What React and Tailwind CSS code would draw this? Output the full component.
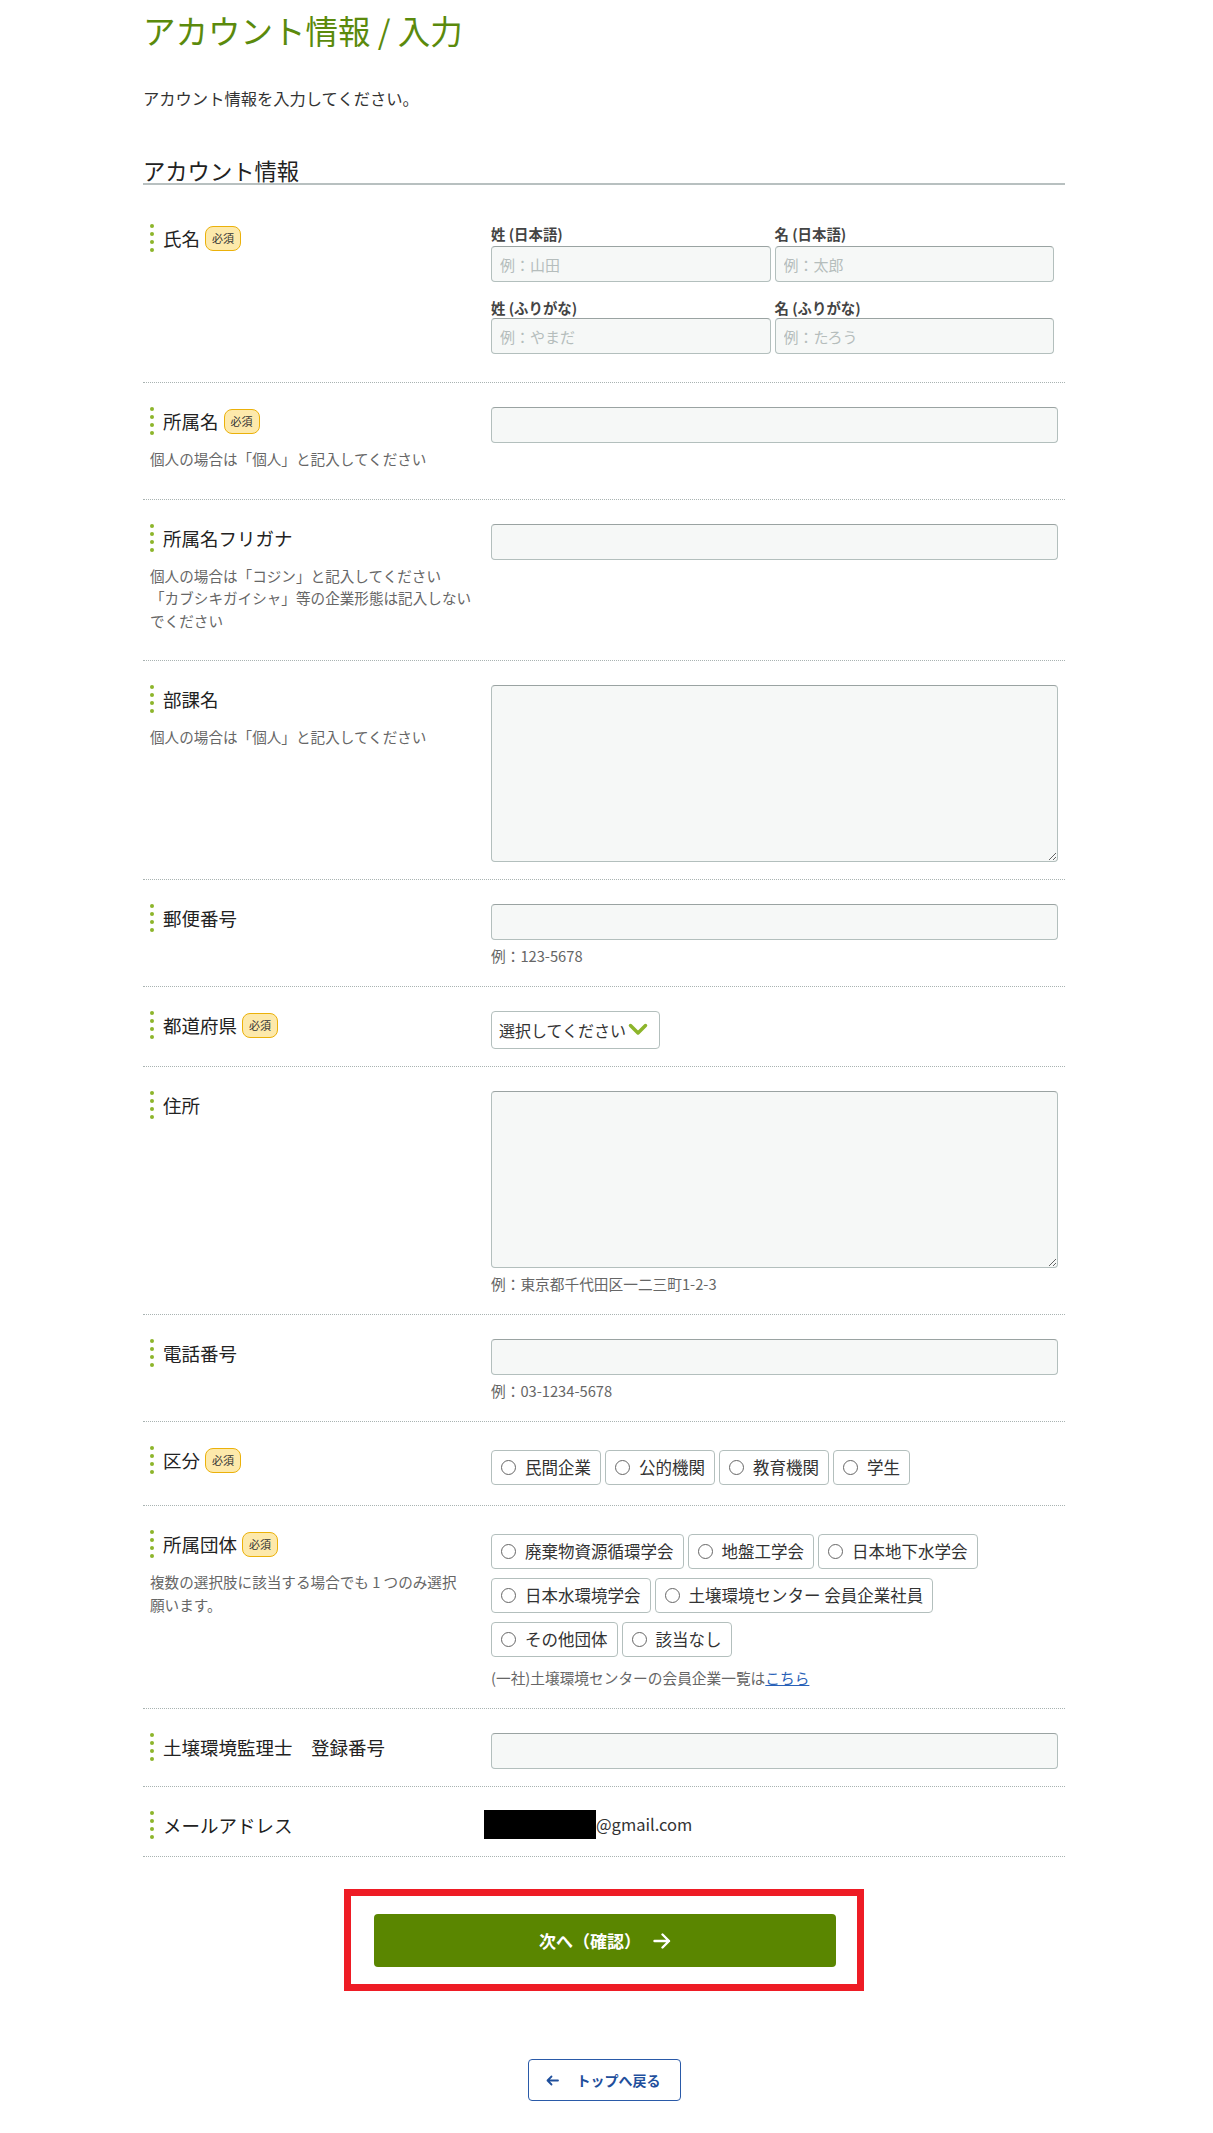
import React from 'react';

const Dots = () => (
  <span className="flex flex-col gap-[4px] shrink-0">
    {[0, 1, 2, 3].map(i => (
      <span key={i} className="block w-[4px] h-[4px] rounded-full bg-[#8db52b]" />
    ))}
  </span>
);

const Badge = () => (
  <span className="inline-flex items-center justify-center h-[25px] px-[6px] rounded-[8px] border border-[#ebb10a] bg-[#fde9ab] text-[11px] leading-none text-[#333]">
    必須
  </span>
);

const Label = ({ text, required }) => (
  <div className="flex items-center gap-[9px]">
    <Dots />
    <div className="flex items-center gap-[5px]">
      <span className="text-[18.5px] leading-[26px] text-[#222]">{text}</span>
      {required && <Badge />}
    </div>
  </div>
);

const Help = ({ children }) => (
  <p className="mt-[13px] mb-[11px] text-[14.6px] leading-[22.5px] text-[#666]">{children}</p>
);

const Hint = ({ children }) => (
  <p className="mt-[6px] mb-[3px] text-[14.7px] leading-[20px] text-[#666]">{children}</p>
);

const TextInput = ({ placeholder }) => (
  <input
    readOnly
    placeholder={placeholder}
    className="block w-full h-[36px] px-[8px] rounded-[4px] border border-[#b3bfbd] border-t-[#9aa3a2] bg-[#f6f8f7] text-[15px] text-[#333] placeholder:text-[#b5bdbc] outline-none"
  />
);

const TextArea = () => (
  <textarea
    readOnly
    className="block w-full h-[177px] px-[8px] py-[6px] rounded-[4px] border border-[#b3bfbd] border-t-[#9aa3a2] bg-[#f6f8f7] text-[15px] outline-none"
  />
);

const Radio = ({ text }) => (
  <label className="inline-flex items-center gap-[9px] h-[35px] px-[9px] rounded-[4px] border border-[#b3bfbd] bg-white text-[16.5px] text-[#333] whitespace-nowrap">
    <span className="block w-[15px] h-[15px] rounded-full border border-[#666] bg-white" />
    {text}
  </label>
);

const Row = ({ label, required, help, children }) => (
  <div className="flex px-[7px] pt-[24px] pb-[17px] border-b border-dotted border-[#a9b3b2]">
    <div className="w-[341px] shrink-0">
      <Label text={label} required={required} />
      {help && <Help>{help}</Help>}
    </div>
    <div className="flex-1">{children}</div>
  </div>
);

const SubLabel = ({ children }) => (
  <p className="text-[14.4px] leading-[20px] font-bold text-[#444]">{children}</p>
);

export default function App() {
  return (
    <div className="min-h-[2133px] bg-white font-['Noto_Sans_CJK_JP','Noto_Sans',sans-serif] text-[#333]">
      <div className="w-[922px] ml-[143px] pt-[8px] pb-[30px]">
        <h1 className="text-[32.5px] leading-[44px] font-normal text-[#5b8a0c]">アカウント情報 / 入力</h1>
        <p className="mt-[34px] text-[16.3px] leading-[24px] text-[#333]">アカウント情報を入力してください。</p>

        <h2 className="mt-[47px] mb-[15px] text-[22.3px] leading-[26px] text-[#222] border-b-2 border-[#b8c0c0]">アカウント情報</h2>

        <div className="flex px-[7px] pt-[24px] pb-[17px] border-b border-dotted border-[#a9b3b2]">
          <div className="w-[341px] shrink-0">
            <Label text="氏名" required />
          </div>
          <div className="flex-1">
            <div className="grid grid-cols-2 gap-x-[4px] w-[563px] mb-[11px]">
              <div>
                <SubLabel>姓 (日本語)</SubLabel>
                <div className="mt-[2px]"><TextInput placeholder="例：山田" /></div>
              </div>
              <div>
                <SubLabel>名 (日本語)</SubLabel>
                <div className="mt-[2px]"><TextInput placeholder="例：太郎" /></div>
              </div>
              <div className="mt-[16px]">
                <SubLabel>姓 (ふりがな)</SubLabel>
                <TextInput placeholder="例：やまだ" />
              </div>
              <div className="mt-[16px]">
                <SubLabel>名 (ふりがな)</SubLabel>
                <TextInput placeholder="例：たろう" />
              </div>
            </div>
          </div>
        </div>

        <Row label="所属名" required help="個人の場合は「個人」と記入してください">
          <TextInput />
        </Row>

        <Row
          label="所属名フリガナ"
          help={<>個人の場合は「コジン」と記入してください<br />「カブシキガイシャ」等の企業形態は記入しない<br />でください</>}
        >
          <TextInput />
        </Row>

        <Row label="部課名" help="個人の場合は「個人」と記入してください">
          <TextArea />
        </Row>

        <Row label="郵便番号">
          <TextInput />
          <Hint>例：123-5678</Hint>
        </Row>

        <Row label="都道府県" required>
          <div className="inline-flex items-center w-[169px] h-[38px] pl-[7px] rounded-[4px] border border-[#b3bfbd] bg-white text-[16px] text-[#333]">
            選択してください
            <svg width="20" height="14" viewBox="0 0 20 14" className="ml-[2px]">
              <path d="M2.5 2.5 L10 10 L17.5 2.5" fill="none" stroke="#8db52b" strokeWidth="3.5" strokeLinecap="round" strokeLinejoin="round" />
            </svg>
          </div>
        </Row>

        <Row label="住所">
          <TextArea />
          <Hint>例：東京都千代田区一二三町1-2-3</Hint>
        </Row>

        <Row label="電話番号">
          <TextInput />
          <Hint>例：03-1234-5678</Hint>
        </Row>

        <Row label="区分" required>
          <div className="flex flex-wrap gap-[4px] mt-[4px] mb-[3px]">
            <Radio text="民間企業" />
            <Radio text="公的機関" />
            <Radio text="教育機関" />
            <Radio text="学生" />
          </div>
        </Row>

        <Row
          label="所属団体"
          required
          help={<>複数の選択肢に該当する場合でも 1 つのみ選択<br />願います。</>}
        >
          <div className="flex flex-wrap gap-x-[4px] gap-y-[9px] mt-[4px] w-[545px]">
            <Radio text="廃棄物資源循環学会" />
            <Radio text="地盤工学会" />
            <Radio text="日本地下水学会" />
            <Radio text="日本水環境学会" />
            <Radio text="土壌環境センター 会員企業社員" />
            <Radio text="その他団体" />
            <Radio text="該当なし" />
          </div>
          <p className="mt-[11px] mb-[3px] text-[14.7px] leading-[20px] text-[#666]">
            (一社)土壌環境センターの会員企業一覧は<span className="text-[#2a62b8] underline">こちら</span>
          </p>
        </Row>

        <Row label="土壌環境監理士　登録番号">
          <TextInput />
        </Row>

        <Row label="メールアドレス">
          <div className="flex items-center h-[26px] -ml-[7px]">
            <span className="block w-[112px] h-[29px] bg-black" />
            <span className="text-[16.5px] text-[#333]">@gmail.com</span>
          </div>
        </Row>

        <div className="mt-[32px] flex justify-center">
          <div className="w-[520px] border-[7px] border-[#ee1c25] pt-[18px] pb-[17px] pl-[23px] pr-[21px]">
            <button className="flex items-center justify-center w-full h-[53px] rounded-[4px] bg-[#5a8600] text-white text-[17px] font-bold">
              次へ（確認）
              <svg width="18" height="16" viewBox="0 0 18 16" className="ml-[12px]">
                <path d="M1.5 8 H16 M9.5 1.5 L16 8 L9.5 14.5" fill="none" stroke="white" strokeWidth="2.4" strokeLinecap="round" strokeLinejoin="round" />
              </svg>
            </button>
          </div>
        </div>

        <div className="mt-[68px] flex justify-center">
          <button className="flex items-center w-[153px] h-[42px] pl-[17px] rounded-[4px] border border-[#2a5aa8] bg-white text-[14px] font-bold text-[#1f4f9c]">
            <svg width="13" height="11" viewBox="0 0 13 11">
              <path d="M12 5.5 H1.5 M5.5 1.5 L1.5 5.5 L5.5 9.5" fill="none" stroke="#1f4f9c" strokeWidth="1.8" strokeLinecap="round" strokeLinejoin="round" />
            </svg>
            <span className="ml-[18px]">トップへ戻る</span>
          </button>
        </div>
      </div>
    </div>
  );
}
